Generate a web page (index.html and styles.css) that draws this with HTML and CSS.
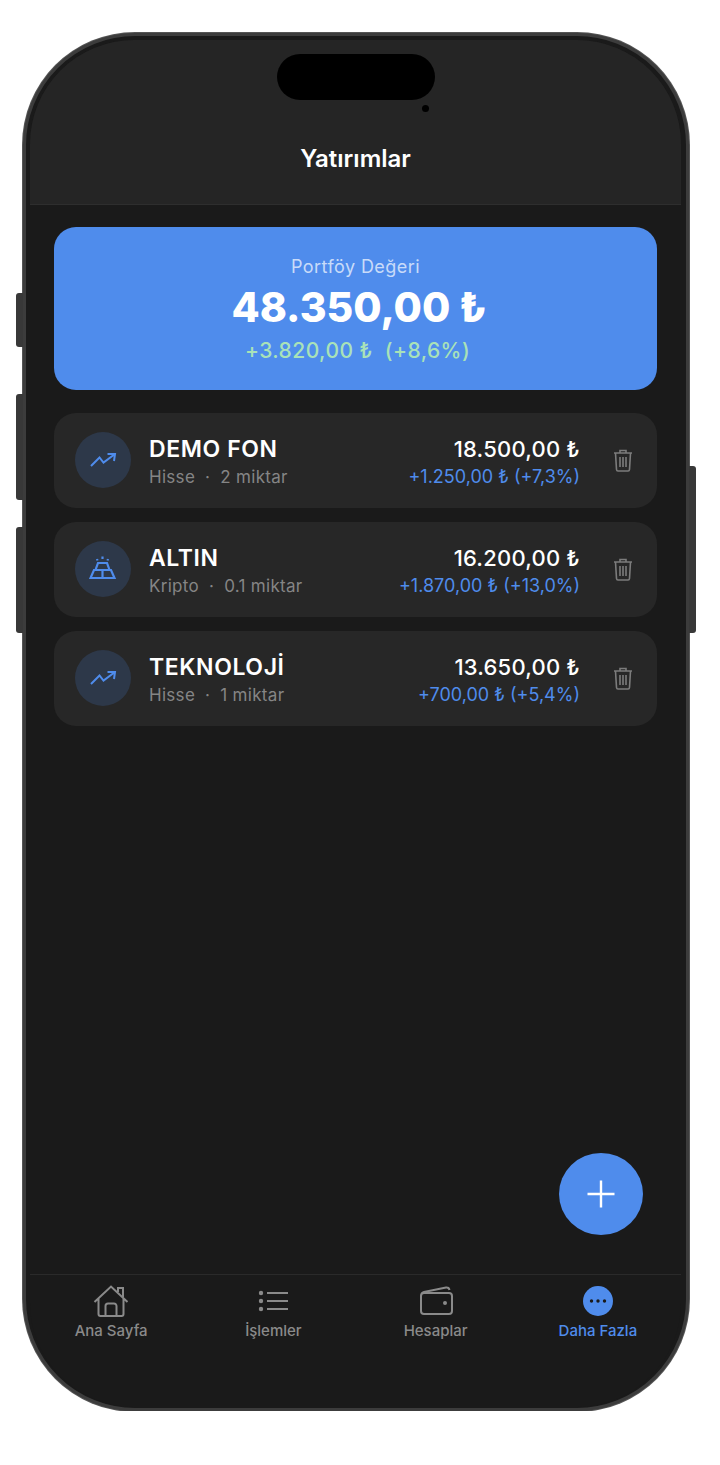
FILE: index.html
```html
<!DOCTYPE html>
<html lang="tr">
    <head>
        <meta charset="utf-8">
        <title>Yatırımlar</title>
        <link rel="stylesheet" href="styles.css">
    </head>
    <body>
        <div class="phone">
            <span class="side-btn btn-mute"></span>
            <span class="side-btn btn-up"></span>
            <span class="side-btn btn-down"></span>
            <span class="side-btn btn-power"></span>
            <div class="screen">
                <span class="island"></span>
                <span class="island-dot"></span>
                <header class="top-bar">
                    <h1>Yatırımlar</h1>
                </header>
                <main class="content">
                    <section class="summary">
                        <p class="summary-label">Portföy Değeri</p>
                        <p class="summary-value">48.350,00 ₺</p>
                        <p class="summary-gain">+3.820,00 ₺&nbsp; (+8,6%)</p>
                    </section>
                    <div class="row">
                        <span class="row-icon">
                            <svg width="28" height="28" viewBox="0 0 28 28"><path d="M2 20l8.500-8.500 4 5L26 8M18.500 8H26l-1 7"/></svg>
                        </span>
                        <div class="row-text">
                            <p class="row-name">DEMO FON</p>
                            <p class="row-sub"><span>Hisse</span><span>·</span><span>2 miktar</span></p>
                        </div>
                        <div class="row-amount">
                            <p class="row-value">18.500,00 ₺</p>
                            <p class="row-gain">+1.250,00 ₺ (+7,3%)</p>
                        </div>
                        <svg class="trash" width="20" height="24" viewBox="0 0 20 24"><path d="M1 5h18M7 5V2.500h6V5M2.500 5l1 16.500q.1 1.500 1.500 1.500h10q1.400 0 1.500-1.500l1-16.500M7 9v10M10 9v10M13 9v10"/></svg>
                    </div>
                    <div class="row">
                        <span class="row-icon">
                            <svg class="gold" width="28" height="28" viewBox="0 0 28 28"><path d="M9 8h9l2.500 7h-14zM5 15h17l3.500 8H1.500zM13.500 15v8M8 4l.5 1.500M13.500 1.500v2.500M19 4l-.5 1.500"/></svg>
                        </span>
                        <div class="row-text">
                            <p class="row-name">ALTIN</p>
                            <p class="row-sub"><span>Kripto</span><span>·</span><span>0.1 miktar</span></p>
                        </div>
                        <div class="row-amount">
                            <p class="row-value">16.200,00 ₺</p>
                            <p class="row-gain">+1.870,00 ₺ (+13,0%)</p>
                        </div>
                        <svg class="trash" width="20" height="24" viewBox="0 0 20 24"><path d="M1 5h18M7 5V2.500h6V5M2.500 5l1 16.500q.1 1.500 1.500 1.500h10q1.400 0 1.500-1.500l1-16.500M7 9v10M10 9v10M13 9v10"/></svg>
                    </div>
                    <div class="row">
                        <span class="row-icon">
                            <svg width="28" height="28" viewBox="0 0 28 28"><path d="M2 20l8.500-8.500 4 5L26 8M18.500 8H26l-1 7"/></svg>
                        </span>
                        <div class="row-text">
                            <p class="row-name">TEKNOLOJİ</p>
                            <p class="row-sub"><span>Hisse</span><span>·</span><span>1 miktar</span></p>
                        </div>
                        <div class="row-amount">
                            <p class="row-value">13.650,00 ₺</p>
                            <p class="row-gain">+700,00 ₺ (+5,4%)</p>
                        </div>
                        <svg class="trash" width="20" height="24" viewBox="0 0 20 24"><path d="M1 5h18M7 5V2.500h6V5M2.500 5l1 16.500q.1 1.500 1.500 1.500h10q1.400 0 1.500-1.500l1-16.500M7 9v10M10 9v10M13 9v10"/></svg>
                    </div>
                    <button class="fab" type="button">
                        <svg width="30" height="30" viewBox="0 0 30 30"><path d="M15 1.500v27M1.500 15h27"/></svg>
                    </button>
                </main>
                <nav class="tabs">
                    <a class="tab">
                        <svg width="36" height="32" viewBox="0 0 36 32"><path d="M1.500 17 18 1.500 34.500 17M5.500 13v16a2 2 0 0 0 2 2h21a2 2 0 0 0 2-2V13M12.500 31V21a2.500 2.500 0 0 1 2.500-2.500h6a2.500 2.500 0 0 1 2.500 2.500v10M25 7V3h5v9"/></svg>
                        <span>Ana Sayfa</span>
                    </a>
                    <a class="tab">
                        <svg width="32" height="32" viewBox="0 0 32 32"><path d="M10 8h21M10 16h21M10 24h21"/><circle class="solid" cx="4" cy="8" r="2.200"/><circle class="solid" cx="4" cy="16" r="2.200"/><circle class="solid" cx="4" cy="24" r="2.200"/></svg>
                        <span>İşlemler</span>
                    </a>
                    <a class="tab">
                        <svg width="34" height="32" viewBox="0 0 34 32"><path d="M2 11v15a3 3 0 0 0 3 3h25a3 3 0 0 0 3-3V11a3 3 0 0 0-3-3H5a3 3 0 0 0-3 3q0-3 3-4L27 2.500q3-.5 3.500 2.500"/><circle class="solid" cx="26" cy="18" r="2"/></svg>
                        <span>Hesaplar</span>
                    </a>
                    <a class="tab active">
                        <svg width="32" height="32" viewBox="0 0 32 32"><circle class="disc" cx="16" cy="16" r="15"/><circle class="hole" cx="9.500" cy="16" r="1.700"/><circle class="hole" cx="16" cy="16" r="1.700"/><circle class="hole" cx="22.500" cy="16" r="1.700"/></svg>
                        <span>Daha Fazla</span>
                    </a>
                </nav>
            </div>
        </div>
    </body>
</html>
```

FILE: styles.css
```css
* {
    box-sizing: border-box;
}
html, body {
    background: #fff;
}
body {
    margin: 0;
    font-family: 'Inter', 'Liberation Sans', sans-serif;
}
p, h1 {
    margin: 0;
}
.phone {
    position: relative;
    width: 666px;
    height: 1378px;
    margin: 33px 0 0 23px;
    padding: 4px 5px 1px 4px;
    background: #1a1a1a;
    border: 3px solid #3c3c3c;
    border-radius: 112px;
    box-shadow: 0 0 0 1px #555;
}
.side-btn {
    position: absolute;
    width: 7px;
    background: #383838;
    border-radius: 3px 0 0 3px;
}
.btn-mute {
    left: -10px;
    top: 257px;
    height: 54px;
}
.btn-up {
    left: -10px;
    top: 358px;
    height: 106px;
}
.btn-down {
    left: -10px;
    top: 491px;
    height: 106px;
}
.btn-power {
    right: -10px;
    top: 430px;
    height: 167px;
    border-radius: 0 3px 3px 0;
}
.screen {
    position: relative;
    display: flex;
    flex-direction: column;
    height: 100%;
    overflow: hidden;
    background: #1a1a1a;
    border-radius: 104px;
    color: #fff;
}
.island {
    position: absolute;
    left: 247px;
    top: 14px;
    width: 158px;
    height: 46px;
    background: #000;
    border-radius: 23px;
}
.island-dot {
    position: absolute;
    left: 392px;
    top: 65px;
    width: 7px;
    height: 7px;
    background: #000;
    border-radius: 50%;
}
.top-bar {
    display: flex;
    justify-content: center;
    align-items: flex-end;
    height: 165px;
    padding-bottom: 30px;
    background: #252525;
    border-bottom: 1px solid #2e2e2e;
}
.top-bar h1 {
    font-size: 24px;
    line-height: 30px;
    font-weight: 600;
}
.content {
    position: relative;
    display: flex;
    flex-direction: column;
    gap: 14.5px;
    flex: 1;
    padding: 22px 24px 0;
}
.summary {
    display: flex;
    flex-direction: column;
    align-items: center;
    height: 163px;
    margin-bottom: 8.5px;
    padding-top: 28px;
    background: #4f8cec;
    border-radius: 22px;
}
.summary-label {
    font-size: 18px;
    line-height: 24px;
    letter-spacing: 0.44px;
    color: rgba(255,255,255,0.7);
}
.summary-value {
    padding-left: 7px;
    font-size: 41px;
    line-height: 56px;
    font-weight: 800;
}
.summary-gain {
    margin-top: 1px;
    padding-left: 4px;
    font-size: 21px;
    line-height: 30px;
    letter-spacing: 0.45px;
    font-weight: 500;
    color: #a9e2b8;
}
.row {
    display: flex;
    align-items: center;
    height: 94.5px;
    padding: 0 24px 0 21px;
    background: #272727;
    border-radius: 22px;
}
.row-icon {
    display: flex;
    align-items: center;
    justify-content: center;
    flex: none;
    width: 56px;
    height: 56px;
    background: #2d3849;
    border-radius: 50%;
}
.row-icon path {
    fill: none;
    stroke: #4f8cec;
    stroke-width: 2;
}
.row-icon .gold path {
    stroke-width: 2.2;
}
.row-text {
    flex: 1;
    margin-left: 18px;
    padding-top: 6px;
}
.row-name {
    font-size: 23px;
    line-height: 28px;
    letter-spacing: 0.6px;
    font-weight: 600;
}
.row-sub {
    display: flex;
    gap: 10px;
    font-size: 17px;
    line-height: 28px;
    letter-spacing: 0.3px;
    color: #858585;
}
.row-amount {
    padding-top: 6px;
    text-align: right;
}
.row-value {
    font-size: 22px;
    line-height: 28px;
    letter-spacing: 0.2px;
    font-weight: 500;
}
.row-gain {
    font-size: 18px;
    line-height: 28px;
    color: #4f8cec;
}
.trash {
    flex: none;
    margin-left: 33px;
}
.trash path {
    fill: none;
    stroke: #7c7c7c;
    stroke-width: 1.6;
}
.fab {
    position: absolute;
    right: 38px;
    bottom: 39px;
    display: flex;
    align-items: center;
    justify-content: center;
    width: 84px;
    height: 82px;
    padding: 0;
    background: #4f8cec;
    border: 0;
    border-radius: 50%;
}
.fab path {
    fill: none;
    stroke: #fff;
    stroke-width: 2.4;
}
.tabs {
    display: flex;
    height: 133px;
    padding: 10px 2px 0 0;
    border-top: 1px solid #2a2a2a;
}
.tab {
    display: flex;
    flex-direction: column;
    align-items: center;
    flex: 1;
    font-size: 15px;
    line-height: 22px;
    font-weight: 500;
    color: #8a8a8a;
}
.tab svg {
    height: 32px;
}
.tab span {
    margin-top: 3px;
}
.tab path {
    fill: none;
    stroke: #8a8a8a;
    stroke-width: 2;
}
.tab .solid {
    fill: #8a8a8a;
}
.tab.active {
    color: #4f8cec;
}
.tab .disc {
    fill: #4f8cec;
}
.tab .hole {
    fill: #1a1a1a;
}
```
